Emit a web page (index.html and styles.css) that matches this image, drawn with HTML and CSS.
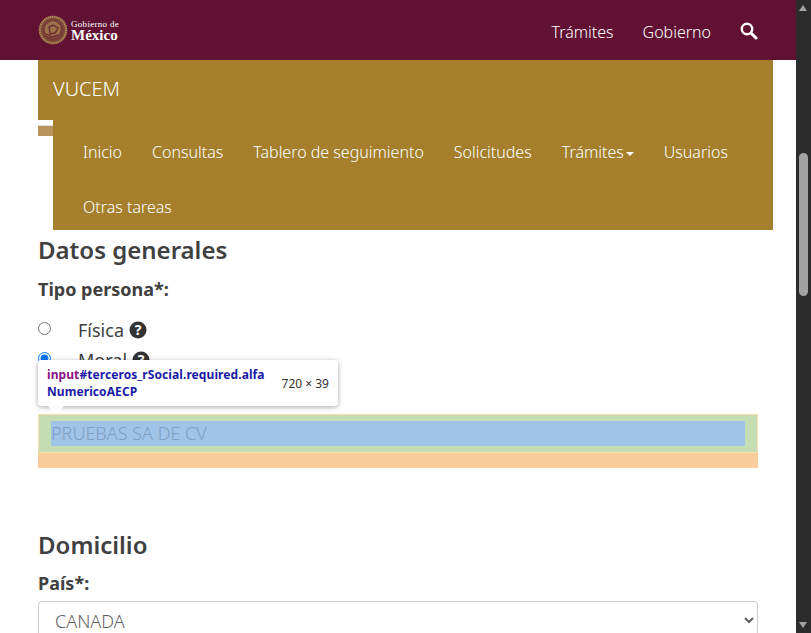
FILE: index.html
```html
<!DOCTYPE html>
<html lang="es">
<head>
<meta charset="UTF-8">
<meta name="viewport" content="width=device-width, initial-scale=1.0">
<title>VUCEM</title>
<link rel="stylesheet" href="styles.css">
</head>
<body>

<div class="viewport">
    <div class="page">

        <!-- Barra de gobierno -->
        <div class="topbar">
            <a class="logo" href="#">
                <svg class="emblem" width="30" height="30" viewBox="0 0 30 30">
                    <circle cx="15" cy="15" r="14" fill="#7d4a3a"/>
                    <circle cx="15" cy="15" r="13.2" fill="none" stroke="#b08a55" stroke-width="2.2" stroke-dasharray="1.4 .7"/>
                    <circle cx="15" cy="15" r="10.4" fill="#7a3a38"/>
                    <path d="M7 12c2-5 8-7 11-5 4 2 6 6 4 10-1 4-6 7-10 5-4-1-6-6-5-10z" fill="#a57f4e" opacity=".8"/>
                    <path d="M11 12l4-2 5 3-3 5-5 1zM9 19l5 3 6-2" fill="none" stroke="#6f2a33" stroke-width="1.4"/>
                </svg>
                <span class="logo-text">
                    <span class="logo-small">Gobierno de</span>
                    <span class="logo-big">México</span>
                </span>
            </a>
            <div class="toplinks">
                <a href="#">Trámites</a>
                <a href="#">Gobierno</a>
                <svg class="search" width="18" height="18" viewBox="0 0 18 18">
                    <circle cx="7" cy="7" r="5.2" fill="none" stroke="#fff" stroke-width="2.4"/>
                    <path d="M11 11l5 5" stroke="#fff" stroke-width="3" stroke-linecap="round"/>
                </svg>
            </div>
        </div>

        <!-- Menu VUCEM -->
        <div class="subnav">
            <div class="brand">VUCEM</div>
            <div class="subnav-row">
                <div class="collapse-mark"></div>
                <ul class="menu">
                    <li><a href="#">Inicio</a></li>
                    <li><a href="#">Consultas</a></li>
                    <li><a href="#">Tablero de seguimiento</a></li>
                    <li><a href="#">Solicitudes</a></li>
                    <li><a href="#">Trámites<span class="caret"></span></a></li>
                    <li><a href="#">Usuarios</a></li>
                    <li><a href="#">Otras tareas</a></li>
                </ul>
            </div>
        </div>

        <!-- Formulario -->
        <div class="content">
            <h3 class="section-title">Datos generales</h3>
            <label class="field-label">Tipo persona*:</label>
            <div class="radio-row first">
                <input type="radio" name="tipo">
                <span>Física</span>
                <svg class="help" viewBox="0 0 18 18"><circle cx="9" cy="9" r="8.5" fill="#333"/><text x="9" y="13.5" text-anchor="middle">?</text></svg>
            </div>
            <div class="radio-row">
                <input type="radio" name="tipo" checked>
                <span>Moral</span>
                <svg class="help" viewBox="0 0 18 18"><circle cx="9" cy="9" r="8.5" fill="#333"/><text x="9" y="13.5" text-anchor="middle">?</text></svg>
            </div>

            <div class="inspected">
                <div class="inspected-box">
                    <div class="inspected-content">PRUEBAS SA DE CV</div>
                </div>
                <div class="inspected-margin"></div>
                <div class="inspect-tip">
                    <div class="tip-name"><span class="tip-tag">input</span>#terceros_rSocial.required.alfa NumericoAECP</div>
                    <div class="tip-size">720 × 39</div>
                    <span class="tip-arrow"></span>
                </div>
            </div>

            <h3 class="section-title domicilio">Domicilio</h3>
            <label class="field-label pais">País*:</label>
            <select class="select">
                <option>CANADA</option>
            </select>
        </div>
    </div>

    <!-- Barra de desplazamiento -->
    <div class="scrollbar">
        <span class="arrow-up"></span>
        <span class="thumb"></span>
        <span class="arrow-down"></span>
    </div>
</div>

</body>
</html>
```

FILE: styles.css
```css
* {
    box-sizing: border-box;
}

html, body {
    margin: 0;
    height: 100%;
    overflow: hidden;
}

body {
    font-family: "Noto Sans", "Open Sans", sans-serif;
    font-size: 18px;
    font-weight: 300;
    color: #404041;
    background: #fff;
}

a {
    color: inherit;
    text-decoration: none;
}

.viewport {
    display: flex;
    height: 633px;
}

.page {
    width: 796px;
    height: 633px;
    overflow: hidden;
}

/* barra superior */
.topbar {
    height: 60px;
    background: #611232;
    padding: 0 38px;
    display: flex;
    align-items: center;
    justify-content: space-between;
    color: #fff;
}

.logo {
    display: flex;
    align-items: center;
    gap: 3px;
}

.logo-text {
    display: flex;
    flex-direction: column;
    font-family: "Liberation Serif", serif;
    font-weight: 400;
}

.logo-small {
    font-size: 9px;
    line-height: 9px;
    letter-spacing: .3px;
}

.logo-big {
    font-size: 15px;
    line-height: 12px;
    font-weight: bold;
}

.toplinks {
    display: flex;
    align-items: center;
    gap: 29px;
    padding-top: 4px;
    font-size: 16px;
}

.search {
    margin-bottom: 3px;
}

/* menu */
.subnav {
    width: 735px;
    margin-left: 38px;
    color: #fff;
}

.brand {
    height: 60px;
    background: #a57f2c;
    padding-left: 15px;
    font-size: 20px;
    line-height: 58px;
}

.subnav-row {
    display: flex;
}

.collapse-mark {
    width: 15px;
    height: 11px;
    margin-top: 5px;
    background: #b8955f;
    border-top: 1px solid #ddd;
}

.menu {
    flex: 1;
    margin: 0;
    padding: 5px 0 0 15px;
    height: 110px;
    background: #a57f2c;
    list-style: none;
    display: flex;
    flex-wrap: wrap;
    font-size: 16px;
}

.menu a {
    display: block;
    padding: 0 15px;
    line-height: 55px;
    height: 55px;
}

.caret {
    display: inline-block;
    margin-left: 2px;
    vertical-align: middle;
    border-top: 4px solid #fff;
    border-left: 4px solid transparent;
    border-right: 4px solid transparent;
}

/* formulario */
.content {
    padding: 0 38px;
}

.section-title {
    margin: 0;
    padding-top: 2px;
    font-size: 24px;
    line-height: 35px;
    font-weight: 600;
}

.field-label {
    display: block;
    margin-top: 9px;
    font-size: 18px;
    line-height: 27px;
    font-weight: 700;
}

.field-label.pais {
    margin-top: 8px;
}

.radio-row {
    height: 30px;
    display: flex;
    align-items: center;
    font-size: 18px;
    font-weight: 400;
}

.radio-row.first {
    margin-top: 12px;
}

.radio-row input {
    width: 13px;
    height: 13px;
    margin: 0 27px 3px 0;
}

.help {
    width: 18px;
    height: 18px;
    margin-left: 5px;
}

.help text {
    fill: #fff;
    font-size: 14px;
    font-weight: 700;
}

/* resaltado del inspector */
.inspected {
    position: relative;
    margin-top: 39px;
}

.inspected-box {
    height: 39px;
    padding: 6px 12px 6px;
    background: #c4ddb3;
    border: 1px solid #f7dfa8;
}

.inspected-content {
    height: 25px;
    background: #9fc4e7;
    color: #7f9fc4;
    font-size: 18px;
    line-height: 25px;
    white-space: nowrap;
}

.inspected-margin {
    height: 15px;
    background: #f8cc9b;
}

.inspect-tip {
    position: absolute;
    left: 0;
    top: -54px;
    width: 300px;
    height: 46px;
    padding: 8px 9px;
    background: #fff;
    border-radius: 3px;
    box-shadow: 0 1px 5px rgba(0, 0, 0, .35);
    display: flex;
    align-items: center;
    justify-content: space-between;
    gap: 12px;
    font-size: 12px;
    font-weight: 400;
}

.tip-name {
    width: 224px;
    line-height: 17px;
    font-weight: 700;
    letter-spacing: .08px;
    color: #1a1aa6;
    overflow-wrap: anywhere;
}

.tip-tag {
    color: #881280;
}

.tip-size {
    color: #333;
    white-space: nowrap;
}

.tip-arrow {
    position: absolute;
    left: 10px;
    bottom: -8px;
    border-top: 8px solid #fff;
    border-left: 8px solid transparent;
    border-right: 8px solid transparent;
}

.domicilio {
    margin-top: 57px;
}

.select {
    display: block;
    width: 720px;
    height: 39px;
    margin-top: 4px;
    padding: 0 12px;
    font-family: inherit;
    font-size: 18px;
    font-weight: 300;
    color: #5f5f5f;
    background: #fff;
    border: 1px solid #ccc;
    border-radius: 4px;
}

/* scrollbar */
.scrollbar {
    position: relative;
    width: 15px;
    height: 633px;
    background: #2c2c2c;
}

.arrow-up,
.arrow-down {
    position: absolute;
    left: 3px;
    border-left: 4.5px solid transparent;
    border-right: 4.5px solid transparent;
}

.arrow-up {
    top: 5px;
    border-bottom: 6px solid #a3a3a3;
}

.arrow-down {
    bottom: 5px;
    border-top: 6px solid #a3a3a3;
}

.thumb {
    position: absolute;
    left: 3px;
    top: 153px;
    width: 9px;
    height: 143px;
    background: #a3a3a3;
    border-radius: 5px;
}
```
